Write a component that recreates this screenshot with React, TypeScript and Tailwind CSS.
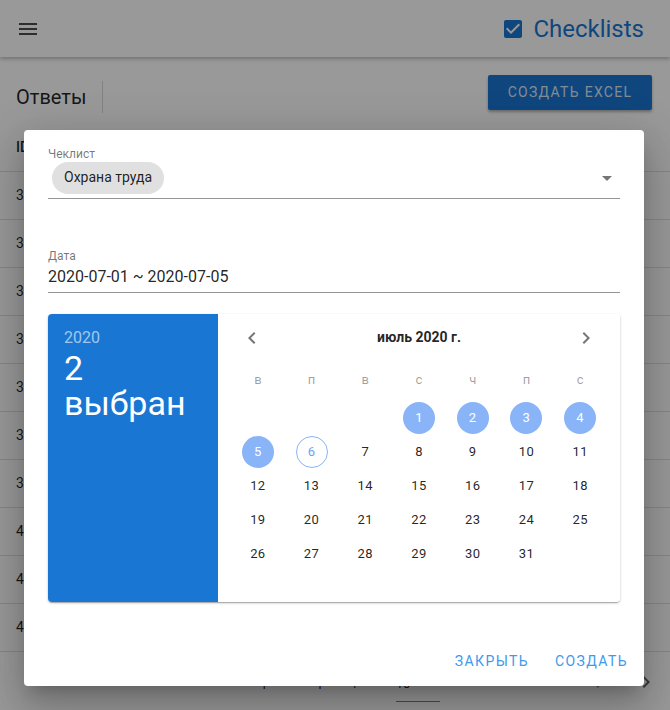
import React from 'react';

const weekDays = ['в', 'п', 'в', 'с', 'ч', 'п', 'с'];
const rowIds = ['3', '3', '3', '3', '3', '3', '3', '4', '4', '4'];

const Icon: React.FC<{ d: string; className?: string }> = ({ d, className }) => (
  <svg viewBox="0 0 24 24" className={className} fill="currentColor">
    <path d={d} />
  </svg>
);

const MENU = 'M3 18h18v-2H3v2zm0-5h18v-2H3v2zm0-7v2h18V6H3z';
const CHECKBOX =
  'M19 3H5c-1.11 0-2 .9-2 2v14c0 1.1.89 2 2 2h14c1.11 0 2-.9 2-2V5c0-1.1-.89-2-2-2zm-9 14l-5-5 1.41-1.41L10 14.17l7.59-7.59L19 8l-9 9z';
const DROP = 'M7 10l5 5 5-5z';
const PREV = 'M15.41 7.41L14 6l-6 6 6 6 1.41-1.41L10.83 12z';
const NEXT = 'M10 6L8.59 7.41 13.17 12l-4.58 4.59L10 18l6-6z';

const DayCell: React.FC<{ day: number | null }> = ({ day }) => {
  if (day === null) return <div className="h-[34px]" />;
  const selected = day >= 1 && day <= 5;
  const hover = day === 6;
  return (
    <div className="h-[34px] flex items-center justify-center">
      <div
        className={`w-8 h-8 rounded-full flex items-center justify-center text-[13px] tracking-[0.4px] ${
          selected
            ? 'bg-[#8ab4f8] text-white'
            : hover
            ? 'border border-[#8ab4f8] text-[#6fa3f5]'
            : 'text-[rgba(0,0,0,0.87)]'
        }`}
      >
        {day}
      </div>
    </div>
  );
};

export default function App() {
  const cells: (number | null)[] = [null, null, null];
  for (let i = 1; i <= 31; i++) cells.push(i);

  return (
    <div className="relative w-[670px] h-[710px] overflow-hidden bg-white font-['Roboto',sans-serif]">
      {/* page underneath */}
      <header className="h-[57px] flex items-center justify-between pl-4 pr-[26px] bg-white shadow-[0_2px_4px_rgba(0,0,0,0.25)] relative">
        <Icon d={MENU} className="w-6 h-6 text-[rgba(0,0,0,0.7)]" />
        <div className="flex items-center gap-[8px] text-[#1976d2]">
          <Icon d={CHECKBOX} className="w-6 h-6" />
          <span className="text-[24px] leading-none">Checklists</span>
        </div>
      </header>

      <div className="flex items-start justify-between pl-4 pr-[18px] h-[67px]">
        <div className="flex items-center mt-[24px]">
          <span className="text-[20px] leading-[32px] text-[rgba(0,0,0,0.87)]">Ответы</span>
          <div className="w-px h-8 bg-[rgba(0,0,0,0.15)] ml-4" />
        </div>
        <button className="mt-[18px] w-[164px] h-[35px] bg-[#1976d2] text-[rgba(255,255,255,0.85)] text-[14px] tracking-[1.3px] rounded-[2px] shadow-[0_2px_3px_rgba(0,0,0,0.3)]">
          СОЗДАТЬ EXCEL
        </button>
      </div>

      <div>
        <div className="h-[48px] flex items-center px-4 border-b border-[#e0e0e0] text-[14px] font-medium text-[rgba(0,0,0,0.87)]">
          ID
        </div>
        {rowIds.map((id, i) => (
          <div
            key={i}
            className="h-[48px] flex items-center px-4 border-b border-[#e0e0e0] text-[14px] text-[rgba(0,0,0,0.87)]"
          >
            {id}
          </div>
        ))}
        <div className="flex items-center h-[60px] whitespace-nowrap text-[13px] text-[rgba(0,0,0,0.87)]">
          <span className="ml-[248px]">Строк на странице:</span>
          <span className="ml-[30px] w-[44px] border-b border-[rgba(0,0,0,0.5)] pb-[8px] mt-[12px]">10</span>
          <span className="ml-[40px]">1-10 из 392</span>
          <Icon d={PREV} className="w-6 h-6 ml-[36px] text-[rgba(0,0,0,0.4)]" />
          <Icon d={NEXT} className="w-6 h-6 ml-[26px] text-[rgba(0,0,0,0.6)]" />
        </div>
      </div>

      {/* backdrop */}
      <div className="absolute inset-0 bg-black/40" />

      {/* dialog */}
      <div className="absolute left-[24px] top-[130px] w-[620px] h-[556px] bg-white rounded-[4px] shadow-[0_11px_15px_-7px_rgba(0,0,0,0.2),0_24px_38px_3px_rgba(0,0,0,0.14),0_9px_46px_8px_rgba(0,0,0,0.12)] flex flex-col">
        <div className="px-6 pt-[17px] flex-1">
          {/* checklist select */}
          <div className="text-[12px] leading-[14px] text-[rgba(0,0,0,0.54)]">Чеклист</div>
          <div className="flex items-center justify-between border-b border-[rgba(0,0,0,0.42)] h-[38px] pb-[4px]">
            <div className="ml-[4px] h-8 px-3 rounded-full bg-[#e0e0e0] flex items-center text-[14px] text-[rgba(0,0,0,0.87)]">
              Охрана труда
            </div>
            <Icon d={DROP} className="w-6 h-6 text-[rgba(0,0,0,0.54)] mr-[1px]" />
          </div>

          {/* date field */}
          <div className="mt-[50px] text-[12px] leading-[14px] text-[rgba(0,0,0,0.54)]">Дата</div>
          <div className="h-[30px] flex items-center border-b border-[rgba(0,0,0,0.42)] text-[16px] text-[rgba(0,0,0,0.87)] pb-[2px]">
            2020-07-01 ~ 2020-07-05
          </div>

          {/* picker */}
          <div className="mt-[21px] h-[288px] flex rounded-[4px] overflow-hidden shadow-[0_1px_3px_rgba(0,0,0,0.2),0_1px_1px_rgba(0,0,0,0.14),0_2px_1px_-1px_rgba(0,0,0,0.12)]">
            <div className="w-[170px] bg-[#1976d2] px-4 pt-[12px]">
              <div className="text-[16px] leading-6 text-[rgba(255,255,255,0.6)]">2020</div>
              <div className="mt-[1px] text-[34px] leading-[35px] text-white">2</div>
              <div className="text-[34px] leading-[35px] text-white">выбран</div>
            </div>
            <div className="flex-1 bg-white">
              <div className="h-[47px] flex items-center justify-between px-[10px]">
                <div className="w-12 h-12 flex items-center justify-center">
                  <Icon d={PREV} className="w-6 h-6 text-[rgba(0,0,0,0.54)]" />
                </div>
                <span className="text-[14px] font-bold text-[rgba(0,0,0,0.87)]">июль 2020 г.</span>
                <div className="w-12 h-12 flex items-center justify-center">
                  <Icon d={NEXT} className="w-6 h-6 text-[rgba(0,0,0,0.54)]" />
                </div>
              </div>
              <div className="px-[13px]">
                <div className="mt-[8px] h-[22px] grid grid-cols-7">
                  {weekDays.map((d, i) => (
                    <div key={i} className="flex items-center justify-center text-[13px] text-[rgba(0,0,0,0.38)]">
                      {d}
                    </div>
                  ))}
                </div>
                <div className="mt-[10px] grid grid-cols-7">
                  {cells.map((d, i) => (
                    <DayCell key={i} day={d} />
                  ))}
                </div>
              </div>
            </div>
          </div>
        </div>

        <div className="flex justify-end gap-[10px] px-2 pb-[7px]">
          <button className="px-2 h-9 text-[14px] tracking-[1.4px] text-[#4299eb]">ЗАКРЫТЬ</button>
          <button className="px-2 h-9 text-[14px] tracking-[1.4px] text-[#4299eb]">СОЗДАТЬ</button>
        </div>
      </div>
    </div>
  );
}
